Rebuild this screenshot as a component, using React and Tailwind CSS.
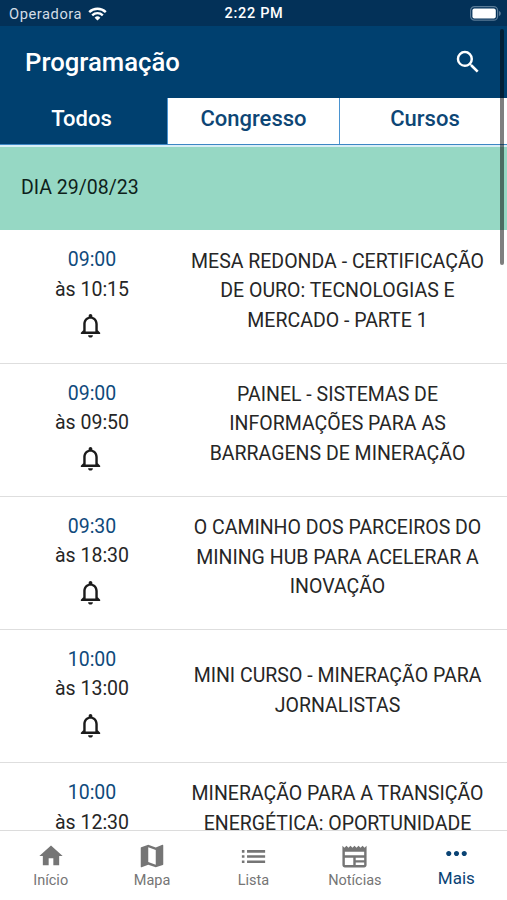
import { useState } from "react";
import {
  MdHome,
  MdList,
  MdMap,
  MdMoreHoriz,
  MdNewspaper,
  MdNotificationsNone,
  MdSearch,
} from "react-icons/md";

const TABS = ["Todos", "Congresso", "Cursos"];

const SESSIONS = [
  {
    start: "09:00",
    end: "10:15",
    title: ["MESA REDONDA - CERTIFICAÇÃO", "DE OURO: TECNOLOGIAS E", "MERCADO - PARTE 1"],
  },
  {
    start: "09:00",
    end: "09:50",
    title: ["PAINEL - SISTEMAS DE", "INFORMAÇÕES PARA AS", "BARRAGENS DE MINERAÇÃO"],
  },
  {
    start: "09:30",
    end: "18:30",
    title: ["O CAMINHO DOS PARCEIROS DO", "MINING HUB PARA ACELERAR A", "INOVAÇÃO"],
  },
  {
    start: "10:00",
    end: "13:00",
    title: ["MINI CURSO - MINERAÇÃO PARA", "JORNALISTAS"],
  },
  {
    start: "10:00",
    end: "12:30",
    title: ["MINERAÇÃO PARA A TRANSIÇÃO", "ENERGÉTICA: OPORTUNIDADE"],
    top: true,
  },
];

const NAV = [
  { label: "Início", icon: MdHome, size: 28 },
  { label: "Mapa", icon: MdMap, size: 30 },
  { label: "Lista", icon: MdList, size: 31 },
  { label: "Notícias", icon: MdNewspaper, size: 29 },
  { label: "Mais", icon: MdMoreHoriz, size: 31 },
];

function StatusBar() {
  return (
    <div className="grid h-[26px] shrink-0 grid-cols-3 items-center bg-[#033158] pl-[9px] pr-[6px] text-white">
      <div className="flex items-center gap-[6px] pt-[2px] text-[14.7px] leading-none tracking-[0.55px] text-[#d3dde6]">
        <span>Operadora</span>
        <svg width="19" height="14" viewBox="0 0 19 14" fill="none" stroke="#fff" strokeWidth="2.4">
          <path d="M1.200 5.200a11.800 11.800 0 0 1 16.600 0" />
          <path d="M4.200 8.300a7.600 7.600 0 0 1 10.600 0" />
          <path d="M9.500 13.600 6.600 10.700a4.100 4.100 0 0 1 5.800 0z" fill="#fff" stroke="none" />
        </svg>
      </div>
      <div className="-ml-[2px] pt-[3px] text-center text-[14.5px] font-medium leading-none tracking-[0.7px]">
        2:22 PM
      </div>
      <svg className="justify-self-end" width="31" height="15" viewBox="0 0 31 15">
        <rect x="0.6" y="0.6" width="27" height="13.6" rx="4" fill="none" stroke="#5a7b97" strokeWidth="1.2" />
        <rect x="2.4" y="2.4" width="23.4" height="10" rx="2" fill="#fff" />
        <path d="M29 5v5c1.200-.500 1.800-1.400 1.800-2.500S30.200 5.500 29 5z" fill="#5a7b97" />
      </svg>
    </div>
  );
}

function Session({ session }) {
  return (
    <div className="flex h-[133.2px] shrink-0 border-b border-[#dedede] text-[19.5px] leading-[29.4px] text-[#262626]">
      {/* Time */}
      <div className="flex w-[184px] flex-col items-center pt-[15px]">
        <span className="text-[#0f4a7c]">{session.start}</span>
        <span>às {session.end}</span>
        <MdNotificationsNone className="mr-1 mt-[7px] text-[29px] text-[#1b1b1b]" />
      </div>

      {/* Title */}
      <div
        className={`flex w-[307px] flex-col text-center ${
          session.top ? "pt-[16px]" : "justify-center pb-[11px]"
        }`}
      >
        {session.title.map((line) => (
          <span key={line} className="whitespace-nowrap">
            {line}
          </span>
        ))}
      </div>
    </div>
  );
}

export default function App() {
  const [tab, setTab] = useState("Todos");
  const [page, setPage] = useState("Mais");

  return (
    <div className="relative flex h-[900px] w-[507px] flex-col overflow-hidden bg-white font-[Roboto,sans-serif]">
      <StatusBar />

      {/* Header */}
      <header className="flex h-[72px] shrink-0 items-center justify-between bg-[#00406f] px-[25px] text-white">
        <h1 className="pt-px text-[25.7px] font-medium leading-none">Programação</h1>
        <MdSearch className="-mr-px text-[30px]" />
      </header>

      {/* Tabs */}
      <div className="grid h-[47px] shrink-0 grid-cols-[167px_172px_1fr] border-b border-[#3d87c4]">
        {TABS.map((name) => (
          <button
            key={name}
            onClick={() => setTab(name)}
            className={`border-l border-[#4a93d0] pb-[6px] text-[22px] font-medium first:border-l-0 first:pr-[4px] last:pl-[3px] ${
              tab === name ? "bg-[#00406f] text-white" : "bg-white text-[#0d4675]"
            }`}
          >
            {name}
          </button>
        ))}
      </div>

      {/* Day */}
      <div className="flex h-[85px] shrink-0 items-center border-t-2 border-[#d8eff6] bg-[#96d8c4] pb-px pl-[21px] text-[19.5px] text-[#0e1f1b]">
        DIA 29/08/23
      </div>

      {/* Sessions */}
      <div className="flex min-h-0 flex-1 flex-col overflow-hidden pt-[0.4px]">
        {SESSIONS.map((session) => (
          <Session key={session.title[0]} session={session} />
        ))}
      </div>

      {/* Bottom nav */}
      <nav className="grid h-[70px] shrink-0 grid-cols-5 border-t border-[#dcdcdc] bg-white">
        {NAV.map(({ label, icon: Icon, size }) => (
          <button
            key={label}
            onClick={() => setPage(label)}
            className={`flex flex-col items-center ${
              page === label ? "text-[17px] text-[#0a4374]" : "text-[14.5px] text-[#757575]"
            }`}
          >
            <span className={`flex items-center ${page === label ? "h-[45px]" : "h-[50px]"}`}>
              <Icon size={size} />
            </span>
            <span className={`leading-[16px] ${page === label ? "-mt-[6px]" : "-mt-[8px]"}`}>
              {label}
            </span>
          </button>
        ))}
      </nav>

      {/* Scroll indicator */}
      <div className="absolute right-[3px] top-[29px] h-[236px] w-[4px] rounded-full bg-black/50" />
    </div>
  );
}
